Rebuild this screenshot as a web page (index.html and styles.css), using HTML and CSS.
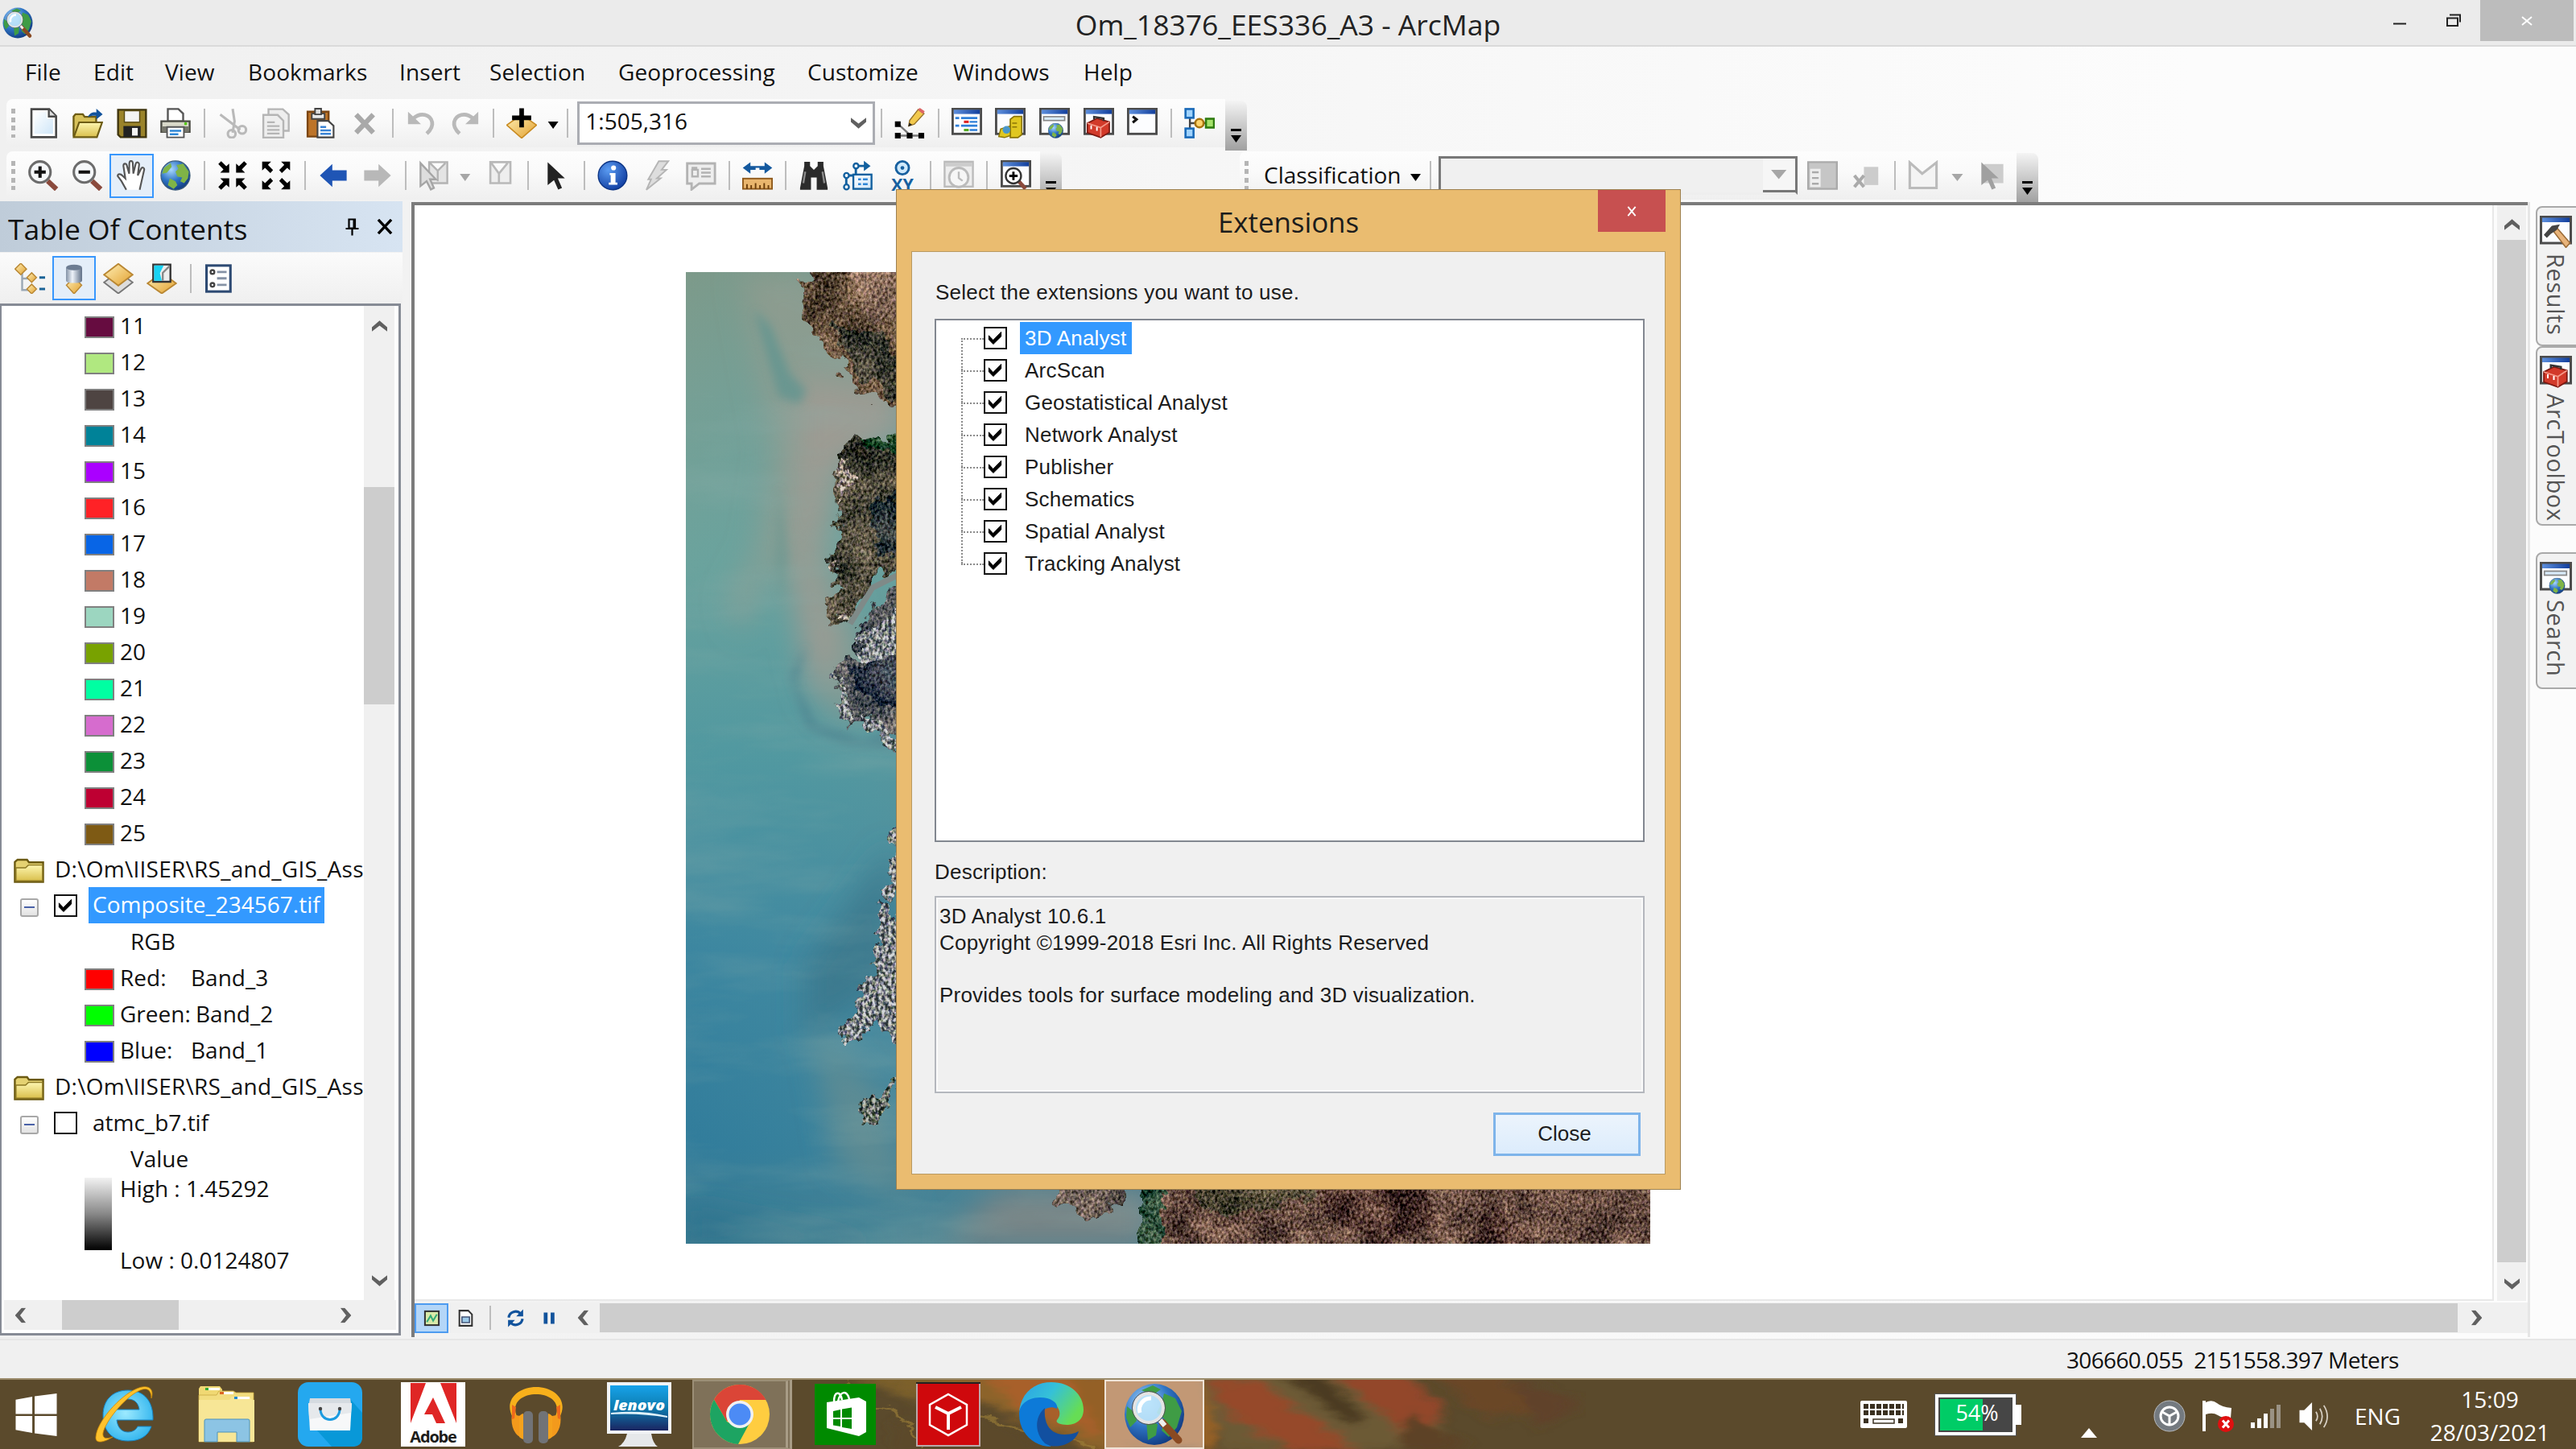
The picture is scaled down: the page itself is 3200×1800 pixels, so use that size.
FILE: index.html
```html
<!DOCTYPE html>
<html lang="en">
<head>
<meta charset="utf-8">
<title>Om_18376_EES336_A3 - ArcMap</title>
<link rel="stylesheet" href="styles.css">
</head>
<body>
<svg class="defs" width="0" height="0" aria-hidden="true">
  <defs>
    <linearGradient id="gold" x1="0" y1="0" x2="1" y2="1"><stop offset="0" stop-color="#fff0b8"/><stop offset="1" stop-color="#e2a02e"/></linearGradient>
    <linearGradient id="yellow" x1="0" y1="0" x2="0" y2="1"><stop offset="0" stop-color="#fdf6b0"/><stop offset="1" stop-color="#d9bf4c"/></linearGradient>
    <linearGradient id="ice" x1="0" y1="0" x2="1" y2="1"><stop offset="0" stop-color="#fff"/><stop offset="1" stop-color="#cfe6f8"/></linearGradient>
    <radialGradient id="ball" cx=".35" cy=".3" r=".8"><stop offset="0" stop-color="#a9d8ff"/><stop offset=".5" stop-color="#2f74c4"/><stop offset="1" stop-color="#0c3276"/></radialGradient>
    <radialGradient id="info" cx=".35" cy=".3" r=".8"><stop offset="0" stop-color="#5b9cf2"/><stop offset="1" stop-color="#0c389c"/></radialGradient>
    <linearGradient id="bar" x1="0" x2="1"><stop offset="0" stop-color="#5d8fdd"/><stop offset="1" stop-color="#123f9d"/></linearGradient>
    <linearGradient id="can" x1="0" x2="1"><stop offset="0" stop-color="#8291a5"/><stop offset=".4" stop-color="#eef3fa"/><stop offset="1" stop-color="#5f6f86"/></linearGradient>
  </defs>
  <symbol id="i-win" viewBox="0 0 16 16"><rect x=".6" y=".6" width="14.8" height="13" fill="#fcfdff" stroke="#4b4b4b" stroke-width="1.2"/><rect x="1.2" y="1" width="13.6" height="2.2" fill="url(#bar)"/></symbol>
  <symbol id="i-globe" viewBox="0 0 16 16"><circle cx="8" cy="8" r="7.6" fill="url(#ball)" stroke="#3b5c7c" stroke-width=".5"/><path d="M8.500 2.500L12 1.800 15 6l-.5 3.500-2 2.500-2-1 1-2-2.500-.5L8 6l1.500-1.500zM2 4l3.500-2.500L6 3.500 3.500 6.500 1 7zM5 9.500l3 1.500 1 2-2 2L4 13z" fill="#7fb447"/></symbol>
  <symbol id="i-new" viewBox="0 0 16 16"><path d="M1.700.7h9.300l3.600 3.600v11H1.700z" fill="#fff" stroke="#4a4a4a" stroke-width="1.100"/><path d="M3.200 2.200h6.500v3.400h3.300v8H3.200z" fill="url(#ice)"/><path d="M10.800.8v3.700h3.700" fill="#ddd" stroke="#4a4a4a"/></symbol>
  <symbol id="i-open" viewBox="0 0 16 16"><path d="M.6 15V4.500l1-1.200h3.800l1 1.400h6v3" fill="#d7c15a" stroke="#6d5c14"/><path d="M.7 15.300L3.500 7.600h12l-2.700 7.700z" fill="url(#yellow)" stroke="#6d5c14" stroke-width=".9"/><path d="M8 4.800C9 2.500 11 2 12.500 2.400V.4L15.800 3.400 12.500 6V4.200C11 3.900 9.500 4.200 8 4.800z" fill="#12539c"/></symbol>
  <symbol id="i-save" viewBox="0 0 16 16"><path d="M.7 1h14.600v14.300H2L.7 14z" fill="#9a832a" stroke="#3f350e"/><rect x="4" y="1.500" width="8" height="6" fill="#f4f4f4" stroke="#584a16" stroke-width=".6"/><path d="M3.500 9.500h9v5.800h-9z" fill="#222"/><path d="M8 10.500h3v4H8z" fill="#f4f4f4"/></symbol>
  <symbol id="i-print" viewBox="0 0 16 16"><path d="M4 7V.6h5.500L12 3v4z" fill="#fff" stroke="#555"/><path d="M.6 7h14.800v5.500H.6z" fill="#d9d9c9" stroke="#4a4a42"/><path d="M1 9.700h14v3H1z" fill="#77776c"/><path d="M3.600 10h8.800v5.400H3.600z" fill="#fff" stroke="#555" stroke-width=".8"/><path d="M5 12h6M5 13.800h4.500" stroke="#2e86d6"/><circle cx="13.300" cy="8.300" r=".8" fill="#57c718"/></symbol>
  <symbol id="i-cut" viewBox="0 0 16 16"><g fill="none" stroke="#b9b9b9" stroke-width="1.300"><path d="M1.500 3.500L12 11.500M8 .5L9 7l-1 6"/><circle cx="13" cy="11.500" r="2"/><circle cx="7.500" cy="13.600" r="2"/></g></symbol>
  <symbol id="i-copy" viewBox="0 0 16 16"><g fill="#eee" stroke="#b5b5b5"><path d="M4 .7h7.500L14.600 3.500V12H4z"/><path d="M1.300 3.700h7.500l3 3v8.800H1.300z"/><path d="M3.300 7.500h4M3.300 9.500h6.500M3.300 11.500h6.500M3.300 13.400h6.500"/></g></symbol>
  <symbol id="i-paste" viewBox="0 0 16 16"><path d="M1.300 2h11v13h-11z" fill="#bd7429" stroke="#7c4612"/><path d="M3.500 3h6.700v2.800H3.500z" fill="#e9e9e9" stroke="#444" stroke-width=".8"/><path d="M5.200.4h3.200v3H5.200z" fill="#ddd" stroke="#444" stroke-width=".8"/><path d="M6.500 6.800h5.600l2.800 2.600v6H6.500z" fill="#fff" stroke="#444" stroke-width=".9"/><path d="M8 10h3M8 11.800h5.500M8 13.600h5.500" stroke="#3a83d4"/></symbol>
  <symbol id="i-del" viewBox="0 0 16 16"><path d="M3.500 3.500l9 9.500M12.500 3.500l-9 9.500" stroke="#a9a9a9" stroke-width="2.600"/></symbol>
  <symbol id="i-undo" viewBox="0 0 16 16"><path d="M4 5.500C8 2 13 3.500 13.800 7.500c.4 2-.6 4-2.800 6" fill="none" stroke="#b9b9b9" stroke-width="2"/><path d="M1.200 2v6.500H8z" fill="#b9b9b9"/></symbol>
  <symbol id="i-add" viewBox="0 0 16 16"><path d="M8 3.500L15.800 9 8 15.800.2 9z" fill="url(#gold)" stroke="#c98b22" stroke-width=".7"/><path d="M8 .2v10M3 5.200h10" stroke="#000" stroke-width="2.400"/></symbol>
  <symbol id="i-pencil" viewBox="0 0 16 16"><path d="M2 8.500l6.500 6M2 14.500h12" stroke="#777" fill="none"/><path d="M.3 7h3v3h-3zM.3 13h3v3h-3zM6.500 13h3v3h-3zM12.600 13h3v3h-3z" fill="#000"/><path d="M7.500 9.500L8 6.500 12.500.8l3 2.200L10.500 8.500z" fill="#f2c94d" stroke="#95712a" stroke-width=".6"/><path d="M12.300 1l1-1 2.600 1.800-1 1.400z" fill="#d66"/><path d="M7.300 9.800l.5-2 1.500 1z" fill="#222"/></symbol>
  <symbol id="i-toc" viewBox="0 0 16 16"><use href="#i-win"/><path d="M2 5.300h2M5 5.300h8.500M2 9.300h2M5 9.300h8.500" stroke="#2e7fd8" stroke-width="1.100"/><path d="M6.500 7.300H9" stroke="#d22" stroke-width="1.300"/><path d="M9.500 7.300h4M9.500 11.600h4" stroke="#2e7fd8"/><path d="M6.500 11.600H9" stroke="#5a2" stroke-width="1.300"/></symbol>
  <symbol id="i-cat" viewBox="0 0 16 16"><use href="#i-win"/><path d="M8 6l2-1.500h4V14l-2 1.500H8z" fill="#e0c720" stroke="#8a7506" stroke-width=".7"/><path d="M9 8h2.500M9 10h2.500" stroke="#8a7506" stroke-width=".7"/><path d="M3 11l5-1.500v5L5 15.500 2 15z" fill="#e0c720" stroke="#8a7506" stroke-width=".6"/><circle cx="6" cy="11.500" r="2" fill="#4a97c9"/></symbol>
  <symbol id="i-srch" viewBox="0 0 16 16"><use href="#i-win"/><rect x="2.300" y="4.600" width="11" height="2" fill="#d8ebfa" stroke="#888" stroke-width=".7"/><svg x="4.500" y="7.800" width="8.200" height="8.200"><use href="#i-globe"/></svg></symbol>
  <symbol id="i-tbx" viewBox="0 0 16 16"><use href="#i-win"/><path d="M2 8l5-2.500 6.500 1.800v5.500L9 15.500 2 13z" fill="#d23a2a" stroke="#7c1710" stroke-width=".7"/><path d="M2 8l7 2.300 4.500-3M9 10.300v5" fill="none" stroke="#f59a8a" stroke-width=".7"/><path d="M5.500 6V4.700l5 .8v1.300" fill="none" stroke="#333"/><path d="M4 9.200v2M7 10v2" stroke="#fff" stroke-width=".8"/></symbol>
  <symbol id="i-py" viewBox="0 0 16 16"><use href="#i-win"/><path d="M3 4.500l2 1.500-2 1.700" fill="none" stroke="#111" stroke-width="1.300"/></symbol>
  <symbol id="i-ham" viewBox="0 0 16 16"><use href="#i-win"/><path d="M7 8l1.500-2L15 13.500 13 15.800z" fill="#e8b37a" stroke="#9a6a35" stroke-width=".6"/><path d="M2 9.500L6 5l4-.7L8.500 7 5.500 9 3.500 11z" fill="#444"/></symbol>
  <symbol id="i-model" viewBox="0 0 16 16"><path d="M3 3v10M3 8h8" stroke="#444" fill="none"/><g stroke-width="1.100"><rect x=".7" y=".6" width="4.200" height="4.600" fill="#9fd3ff" stroke="#1a6ab8"/><rect x=".7" y="10.800" width="4.200" height="4.600" fill="#9fd3ff" stroke="#1a6ab8"/><circle cx="8" cy="8" r="2.200" fill="#ffd36b" stroke="#a8720d"/><rect x="11.400" y="5.700" width="4.200" height="4.600" fill="#a6e26b" stroke="#2f7c10"/></g></symbol>
  <symbol id="i-lens" viewBox="0 0 16 16"><path d="M10.200 10.800l4.600 4.400" stroke="#8b4a3c" stroke-width="2.600"/><circle cx="6.200" cy="6.200" r="5.500" fill="#f5f7f9" stroke="#6c6c6c" stroke-width="1.300"/><path d="M3.200 6.200h6" stroke="#111" stroke-width="1.700"/></symbol>
  <symbol id="i-hand" viewBox="0 0 16 16"><path d="M5 15.500L2.500 11 .5 8.300c0-1.300 1.600-1.300 2.500-.2L4.500 9.500 3.500 3c0-1.500 1.500-1.500 1.800-.2L6.500 7 6.600 1.500C6.700 0 8.300 0 8.400 1.500L8.700 7l1.200-5c.4-1.400 2-1 1.800.5L11 8l1.700-3.500c.7-1.200 2-.5 1.600.8L13 11l-1 4.500" fill="#fff" stroke="#555" stroke-width=".9"/></symbol>
  <symbol id="i-in4" viewBox="0 0 16 16"><path d="M6.200 6.500H1.500L3.200 4.800.5 2 2 .5l2.700 2.700L6.200 1.800zM9.800 6.500h4.700l-1.700-1.700L15.500 2 14 .5l-2.700 2.700-1.500-1.400zM6.200 9.500H1.500l1.700 1.700L.5 14 2 15.500l2.700-2.700 1.500 1.400zM9.800 9.500h4.700l-1.700 1.700 2.700 2.800-1.500 1.500-2.700-2.700-1.500 1.400z"/></symbol>
  <symbol id="i-out4" viewBox="0 0 16 16"><path d="M.7.700h4.700L3.700 2.400l2.700 2.800L5 6.700 2.200 4 .7 5.400zM15.300.700h-4.700l1.700 1.700-2.700 2.800L11 6.700 13.800 4l1.500 1.400zM.7 15.300h4.700l-1.700-1.700 2.700-2.800L5 9.300 2.200 12 .7 10.600zM15.300 15.300h-4.700l1.700-1.700-2.700-2.800L11 9.300l2.800 2.700 1.500-1.400z"/></symbol>
  <symbol id="i-back" viewBox="0 0 16 16"><path d="M1 8l6.500-6v3.300H15v5.400H7.500V14z"/></symbol>
  <symbol id="i-selft" viewBox="0 0 16 16"><path d="M5.500 1H15v11H5.500zM6 1.500l4 4 4-4M10 5.500V11" fill="#e4e4e4" stroke="#b3b3b3"/><path d="M1 1.500l8 8.500H6l2 4.500-1.600.8L4.200 11 1 13.500z" fill="#ddd" stroke="#a5a5a5"/></symbol>
  <symbol id="i-clr" viewBox="0 0 16 16"><path d="M3 1h10.500v11H3zM3.500 1.500L7.500 7l4.500-5.500M7.500 7v4.500" fill="#eee" stroke="#b9b9b9" stroke-width="1.100"/></symbol>
  <symbol id="i-arrow" viewBox="0 0 16 16"><path d="M3.500 1l9 8.500H8.800l2.200 5-2 .9-2.200-5L3.500 13z" fill="#222"/></symbol>
  <symbol id="i-info" viewBox="0 0 16 16"><circle cx="8" cy="8" r="7.500" fill="url(#info)" stroke="#0d3585" stroke-width=".6"/><circle cx="8.500" cy="4" r="1.300" fill="#fff"/><path d="M6.500 6.700h3v5h1v1.100H6v-1.100h1V7.800h-.5z" fill="#fff"/></symbol>
  <symbol id="i-bolt" viewBox="0 0 16 16"><path d="M9 .5h5L10.500 5H13L8 9.500h2L2.500 15.500 5 10H3.500z" fill="#ddd" stroke="#b5b5b5" stroke-width=".8"/></symbol>
  <symbol id="i-html" viewBox="0 0 16 16"><path d="M.7 1.700h14.500v10.500H7L3 15.300v-3.100H.7z" fill="#eee" stroke="#b3b3b3" stroke-width="1.200"/><path d="M3.300 5h3v3.500h-3zM8 4.500h5M8 6.500h5M8 8.500h5M3 4h3" stroke="#b3b3b3" fill="none"/></symbol>
  <symbol id="i-meas" viewBox="0 0 16 16"><path d="M.3 4l4-3v2h7.400V1l4 3-4 3V5H9V4H7v1H4.300v2z" fill="#14599f"/><rect x=".4" y="9.600" width="15.200" height="5.400" fill="#e9b66e" stroke="#8f5a1c" stroke-width=".8"/><path d="M2.500 15v-2.500M4.700 15v-2M7 15v-3M9.300 15v-2M11.500 15v-3M13.700 15v-2" stroke="#6b3d0b" stroke-width=".8"/></symbol>
  <symbol id="i-find" viewBox="0 0 16 16"><path d="M.8 14.500L3 3V.8h3V3l2 2 2-2V.8h3V3l2.200 11.500V15.500H9.500V9h-3v6.500H.8z" fill="#2b2b2b"/><path d="M3.500 6L2.500 12M12.500 6l1 6" stroke="#8a8a8a"/></symbol>
  <symbol id="i-route" viewBox="0 0 16 16"><path d="M1.800 14V8h5V3h5" fill="none" stroke="#12609f" stroke-width="1.200"/><path d="M11 .3L14.500 3 11 5.700z" fill="#12609f"/><g fill="#fff" stroke="#12609f"><circle cx="1.900" cy="14" r="1.300"/><circle cx="1.900" cy="8" r="1.300"/><circle cx="6.900" cy="3" r="1.300"/><rect x="5.500" y="7.500" width="9.500" height="7.500" fill="url(#ice)"/></g><path d="M8 10h1.500M10.500 10H13M8 12.500h1.500M10.500 12.500H13" stroke="#2e86d6"/></symbol>
  <symbol id="i-time" viewBox="0 0 16 16"><rect x=".6" y=".8" width="14.800" height="13" fill="#eee" stroke="#bbb"/><path d="M1 2.300h14" stroke="#ccc" stroke-width="2"/><circle cx="8" cy="9" r="5" fill="#f6f6f6" stroke="#bbb" stroke-width="1.200"/><path d="M8 6v3.300l2 1.500" stroke="#bbb" fill="none"/></symbol>
  <symbol id="i-view" viewBox="0 0 16 16"><use href="#i-win"/><path d="M9.500 11l3.500 4" stroke="#8b4a3c" stroke-width="2"/><circle cx="6.700" cy="8.200" r="4" fill="#fff" stroke="#333"/><path d="M4.500 8.200h4.400M6.700 6v4.400" stroke="#000" stroke-width="1.200"/></symbol>
  <symbol id="i-tree" viewBox="0 0 16 16"><path d="M4 5v9h5M4 8h5" stroke="#9aa7b4" fill="none"/><g fill="url(#gold)" stroke="#b98733" stroke-width=".6"><path d="M3.300 0l3 3-3 3-3-3z"/><path d="M9 5l2.500 2.500L9 10 6.500 7.500z"/><path d="M9 11l2.500 2.500L9 16l-2.500-2.500z"/></g><path d="M13 7.500h3M13 13.500h3" stroke="#1a6397" stroke-width="1.300"/></symbol>
  <symbol id="i-src" viewBox="0 0 16 16"><path d="M8 7.500l4 4L8 16l-4-4.500z" fill="url(#gold)" stroke="#b98733" stroke-width=".6"/><path d="M3.800 2.500v6.500c0 1.800 8.400 1.800 8.400 0V2.500" fill="url(#can)"/><ellipse cx="8" cy="2.200" rx="4.200" ry="1.500" fill="#6c7c92"/></symbol>
  <symbol id="i-vis" viewBox="0 0 16 16"><path d="M8 4.500l7.500 5.500L8 15.800.5 10z" fill="#ddd" stroke="#777" stroke-width=".8"/><path d="M8 .3l7.500 5.700L8 11.700.5 6z" fill="url(#gold)" stroke="#b98733" stroke-width=".8"/></symbol>
  <symbol id="i-sel" viewBox="0 0 16 16"><path d="M8 5l7.500 5.500L8 15.800.5 10.500z" fill="url(#gold)" stroke="#b98733" stroke-width=".8"/><path d="M3.500.7h9v9h-9z" fill="#eee" stroke="#333"/><path d="M4 1.200h5l-2 4 1 4H4z" fill="#19d3f3"/><path d="M12 1.500L8.500 5v4" fill="none" stroke="#888"/></symbol>
  <symbol id="i-list" viewBox="0 0 16 16"><rect x="1.500" y="1.200" width="12.500" height="13.600" fill="#fff" stroke="#2d4a73" stroke-width="1.300"/><g fill="none" stroke="#444"><circle cx="4.600" cy="4.600" r="1"/><circle cx="4.600" cy="11.300" r="1"/></g><path d="M7 4.600h5M7 7.900h5M7 11.300h5" stroke="#8592a5" stroke-width="1.200"/></symbol>
  <symbol id="i-folder" viewBox="0 0 16 13"><path d="M.6 12.400V2L2 .8h5l1 1.400h7.400v10.200z" fill="#e5d272" stroke="#6b5a12"/><path d="M1.200 5h5l1.500-1.400h7.400v8.300H1.200z" fill="url(#yellow)" stroke="#8b7722" stroke-width=".6"/></symbol>
  <symbol id="i-chk" viewBox="0 0 12 12"><path d="M2 4.600l2.800 3L10 2.300v2.900L4.900 10.200 2 7.200z" fill="#000" stroke="#000" stroke-width=".5"/></symbol>
  <symbol id="i-up" viewBox="0 0 18 13"><path d="M0 13V8L9 0l9 8v5L9 6z" fill="#606060"/></symbol>
  <symbol id="i-arcmap" viewBox="0 0 80 80"><ellipse cx="40" cy="40" rx="37" ry="38" fill="url(#ball)"/><path d="M24 10l14-6 10 5-10 7zM52 14l14 6 8 16-6 20-10 12-9-8 4-14-10-8 6-12zM6 30l10 8 2 10-8 8-5-12zM30 48l14 4-2 14-10 6z" fill="#3f9c45"/><path d="M50 50l20 22" stroke="#8a4a22" stroke-width="9" stroke-linecap="round"/><path d="M47 47l6 7" stroke="#eee" stroke-width="6"/><circle cx="33" cy="32" r="18" fill="#bfe6fb" fill-opacity=".9" stroke="#e4e4e4" stroke-width="4"/><circle cx="33" cy="32" r="20.500" fill="none" stroke="#555" stroke-width="1"/><path d="M22 38a14 14 0 0 1 14-18" stroke="#fff" stroke-width="5" fill="none"/></symbol>
</svg>

<header class="titlebar">
  <svg class="app-icon"><use href="#i-arcmap"/></svg>
  <h1 class="window-title">Om_18376_EES336_A3 - ArcMap</h1>
  <div class="window-controls">
    <svg class="min" viewBox="0 0 16 2"><path d="M0 0h16v2H0z" fill="#222"/></svg>
    <svg class="max" viewBox="0 0 18 17"><path d="M1 5.500h13v9.500H1zM4 1.500h13v9" fill="none" stroke="#222" stroke-width="2"/></svg>
    <span class="win-close"><svg viewBox="0 0 14 12"><path d="M1 1l12 10M13 1L1 11" stroke="#fff" stroke-width="2"/></svg></span>
  </div>
</header>

<div class="chrome">
  <nav class="menu">
    <span class="m1">File</span><span class="m2">Edit</span><span class="m3">View</span><span class="m4">Bookmarks</span><span class="m5">Insert</span><span class="m6">Selection</span><span class="m7">Geoprocessing</span><span class="m8">Customize</span><span class="m9">Windows</span><span class="m10">Help</span>
  </nav>
  <div class="bar-row">
    <div class="toolbar">
      <i class="grip"></i>
      <span class="btn"><svg><use href="#i-new"/></svg></span><span class="btn"><svg><use href="#i-open"/></svg></span><span class="btn"><svg><use href="#i-save"/></svg></span><span class="btn"><svg><use href="#i-print"/></svg></span>
      <i class="sep"></i>
      <span class="btn"><svg><use href="#i-cut"/></svg></span><span class="btn"><svg><use href="#i-copy"/></svg></span><span class="btn"><svg><use href="#i-paste"/></svg></span><span class="btn"><svg><use href="#i-del"/></svg></span>
      <i class="sep"></i>
      <span class="btn"><svg><use href="#i-undo"/></svg></span><span class="btn flip"><svg><use href="#i-undo"/></svg></span>
      <i class="sep"></i>
      <span class="btn"><svg><use href="#i-add"/></svg></span><i class="drop"></i>
      <i class="sep"></i>
      <div class="scale-box"><span>1:505,316</span><svg class="down"><use href="#i-up"/></svg></div>
      <i class="sep"></i>
      <span class="btn"><svg><use href="#i-pencil"/></svg></span>
      <i class="sep"></i>
      <span class="btn"><svg><use href="#i-toc"/></svg></span><span class="btn"><svg><use href="#i-cat"/></svg></span><span class="btn"><svg><use href="#i-srch"/></svg></span><span class="btn"><svg><use href="#i-tbx"/></svg></span><span class="btn"><svg><use href="#i-py"/></svg></span>
      <i class="sep"></i>
      <span class="btn"><svg><use href="#i-model"/></svg></span>
    </div>
    <span class="overflow"><i></i><b></b></span>
  </div>
  <div class="bar-row second">
    <div class="toolbar tools">
      <i class="grip"></i>
      <span class="btn"><svg viewBox="0 0 16 16"><use href="#i-lens"/><path d="M6.200 3.200v6" stroke="#111" stroke-width="1.700"/></svg></span><span class="btn"><svg><use href="#i-lens"/></svg></span><span class="btn active"><svg><use href="#i-hand"/></svg></span><span class="btn"><svg><use href="#i-globe"/></svg></span>
      <i class="sep"></i>
      <span class="btn"><svg><use href="#i-in4"/></svg></span><span class="btn"><svg><use href="#i-out4"/></svg></span>
      <i class="sep"></i>
      <span class="btn blue"><svg><use href="#i-back"/></svg></span><span class="btn gray flip"><svg><use href="#i-back"/></svg></span>
      <i class="sep"></i>
      <span class="btn"><svg><use href="#i-selft"/></svg></span><i class="drop off"></i><span class="btn"><svg><use href="#i-clr"/></svg></span>
      <i class="sep"></i>
      <span class="btn"><svg><use href="#i-arrow"/></svg></span>
      <i class="sep"></i>
      <span class="btn"><svg><use href="#i-info"/></svg></span><span class="btn"><svg><use href="#i-bolt"/></svg></span><span class="btn"><svg><use href="#i-html"/></svg></span>
      <i class="sep"></i>
      <span class="btn"><svg><use href="#i-meas"/></svg></span>
      <i class="sep"></i>
      <span class="btn"><svg><use href="#i-find"/></svg></span><span class="btn"><svg><use href="#i-route"/></svg></span><span class="btn"><svg class="xy" viewBox="0 0 16 16"><circle cx="8" cy="4" r="3.400" fill="#cfe9fb" stroke="#17609f" stroke-width="1.200"/><circle cx="8" cy="4" r="1" fill="#17609f"/><text x="8" y="15.900" text-anchor="middle" font-weight="700" font-size="9" fill="#17609f">XY</text></svg></span>
      <i class="sep"></i>
      <span class="btn"><svg><use href="#i-time"/></svg></span>
      <i class="sep"></i>
      <span class="btn"><svg><use href="#i-view"/></svg></span>
    </div>
    <span class="overflow"><i></i><b></b></span>
    <div class="toolbar classify">
      <i class="grip"></i>
      <span class="label">Classification</span><i class="drop"></i>
      <i class="sep"></i>
      <div class="layer-box"><span><i class="drop off"></i></span></div>
      <span class="btn"><svg viewBox="0 0 16 16"><path d="M.5 1h15v14H.5z" fill="#c6c6c6" stroke="#aaa"/><path d="M1.500 4.500h5.500v9.500H1.500z" fill="#eee"/><path d="M2.500 6.300H6M2.500 9.300H6M2.500 12.300H6" stroke="#aaa"/></svg></span><span class="btn"><svg viewBox="0 0 16 16"><path d="M6.500 3.500h7.500V13H6.500z" fill="#ccc"/><path d="M1.500 8l5 6M6.500 8l-5 6" stroke="#aaa" stroke-width="1.700"/></svg></span>
      <i class="sep"></i>
      <span class="btn"><svg viewBox="0 0 16 16"><path d="M1 1.200L7.500 7 15 1.200V14.500H1z" fill="#f4f4f4" stroke="#bbb" stroke-width="1.300"/></svg></span><i class="drop off"></i><span class="btn"><svg viewBox="0 0 16 16"><path d="M5 2h10v10H5z" fill="#ccc"/><path d="M3.500 1l9 8.500H8.800l2.200 5-2 .9-2.200-5L3.500 13z" fill="#a0a0a0"/></svg></span>
    </div>
    <span class="overflow last"><i></i><b></b></span>
  </div>
</div>

<main class="workspace">
  <aside class="toc">
    <div class="toc-head"><h2>Table Of Contents</h2>
      <svg class="pin" viewBox="0 0 16 22"><path d="M4 1.500h7.500v11H4zM0 13h16M8 13v8.500" fill="none" stroke="#000" stroke-width="2.200"/><path d="M9 1h3v12H9z"/></svg>
      <svg class="x" viewBox="0 0 20 20"><path d="M1.500 1l17 18M18.500 1l-17 18" stroke="#000" stroke-width="3.600"/></svg>
    </div>
    <div class="toc-tools">
      <span class="btn"><svg><use href="#i-tree"/></svg></span><span class="btn active"><svg><use href="#i-src"/></svg></span><span class="btn"><svg><use href="#i-vis"/></svg></span><span class="btn"><svg><use href="#i-sel"/></svg></span><i class="sep"></i><span class="btn"><svg><use href="#i-list"/></svg></span>
    </div>
    <div class="tree">
      <div class="tree-main">
        <div class="rows">
          <div class="row cls"><i class="sw c11"></i>11</div>
          <div class="row cls"><i class="sw c12"></i>12</div>
          <div class="row cls"><i class="sw c13"></i>13</div>
          <div class="row cls"><i class="sw c14"></i>14</div>
          <div class="row cls"><i class="sw c15"></i>15</div>
          <div class="row cls"><i class="sw c16"></i>16</div>
          <div class="row cls"><i class="sw c17"></i>17</div>
          <div class="row cls"><i class="sw c18"></i>18</div>
          <div class="row cls"><i class="sw c19"></i>19</div>
          <div class="row cls"><i class="sw c20"></i>20</div>
          <div class="row cls"><i class="sw c21"></i>21</div>
          <div class="row cls"><i class="sw c22"></i>22</div>
          <div class="row cls"><i class="sw c23"></i>23</div>
          <div class="row cls"><i class="sw c24"></i>24</div>
          <div class="row cls"><i class="sw c25"></i>25</div>
          <div class="row dir"><svg><use href="#i-folder"/></svg><span>D:\Om\IISER\RS_and_GIS_Ass</span></div>
          <div class="row layer"><i class="minus"></i><span class="check"><svg><use href="#i-chk"/></svg></span><span class="picked">Composite_234567.tif</span></div>
          <div class="row head">RGB</div>
          <div class="row cls band"><i class="sw red"></i><span class="chan">Red:</span>Band_3</div>
          <div class="row cls band"><i class="sw green"></i><span class="chan wide">Green:</span>Band_2</div>
          <div class="row cls band"><i class="sw blue-sw"></i><span class="chan">Blue:</span>Band_1</div>
          <div class="row dir"><svg><use href="#i-folder"/></svg><span>D:\Om\IISER\RS_and_GIS_Ass</span></div>
          <div class="row layer"><i class="minus"></i><span class="check"></span><span class="plain">atmc_b7.tif</span></div>
          <div class="row head">Value</div>
          <div class="stretch"><i class="ramp"></i><div class="range"><span>High : 1.45292</span><span>Low : 0.0124807</span></div></div>
        </div>
        <div class="vscroll"><svg><use href="#i-up"/></svg><i class="thumb"></i><svg class="down"><use href="#i-up"/></svg></div>
      </div>
      <div class="hscroll"><svg class="left"><use href="#i-up"/></svg><i class="thumb"></i><svg class="right"><use href="#i-up"/></svg></div>
    </div>
  </aside>

  <section class="map-pane">
    <div class="map-main">
      <div class="viewport">
        <svg class="raster" viewBox="852 338 1198 1207" preserveAspectRatio="none">
          <defs>
            <linearGradient id="sea" x1="0" y1="0" x2="0" y2="1"><stop offset="0" stop-color="#7d9a8a"/><stop offset=".12" stop-color="#779f94"/><stop offset=".3" stop-color="#6ba39d"/><stop offset=".5" stop-color="#5098a0"/><stop offset=".7" stop-color="#3c86a0"/><stop offset=".9" stop-color="#317c9b"/><stop offset="1" stop-color="#3b7a90"/></linearGradient>
            <linearGradient id="seaR" x1="0" x2="1"><stop offset="0" stop-color="#55a0a8" stop-opacity="0"/><stop offset=".35" stop-color="#6d8f92" stop-opacity=".45"/></linearGradient>
            <filter id="soft" x="-40%" y="-40%" width="180%" height="180%"><feGaussianBlur stdDeviation="18"/></filter>
            <filter id="soft2" x="-40%" y="-40%" width="180%" height="180%"><feGaussianBlur stdDeviation="6"/></filter>
            <filter id="swirl" x="0" y="0" width="100%" height="100%" color-interpolation-filters="sRGB"><feTurbulence type="fractalNoise" baseFrequency=".004 .018" numOctaves="5" seed="4"/><feColorMatrix values="0 0 0 0 .55  0 0 0 0 .68  0 0 0 0 .66  2.400 0 0 0 -1.050"/></filter>
            <filter id="land" x="-5%" y="-5%" width="110%" height="110%" color-interpolation-filters="sRGB">
              <feTurbulence type="fractalNoise" baseFrequency=".05" numOctaves="3" seed="2" result="w"/>
              <feDisplacementMap in="SourceGraphic" in2="w" scale="34" xChannelSelector="R" yChannelSelector="G" result="s"/>
              <feTurbulence type="fractalNoise" baseFrequency=".3 .24" numOctaves="3" seed="9"/>
              <feColorMatrix values="1.700 0 0 0 -.35  1.500 .2 0 0 -.35  1.400 0 .3 0 -.35  0 0 0 0 1" result="n"/>
              <feTurbulence type="fractalNoise" baseFrequency=".022" numOctaves="3" seed="21"/>
              <feColorMatrix values="2 0 0 0 -.47  1.600 0 0 0 -.3  1.300 0 0 0 -.16  0 0 0 0 1" result="b"/>
              <feComposite in="s" in2="n" operator="arithmetic" k2="1" k3=".55" k4="-.275" result="m"/>
              <feComposite in="m" in2="b" operator="arithmetic" k2="1" k3=".3" k4="-.15" result="mb"/>
              <feComposite in="mb" in2="s" operator="in"/>
            </filter>
            <filter id="town" x="-10%" y="-10%" width="120%" height="120%" color-interpolation-filters="sRGB">
              <feTurbulence type="fractalNoise" baseFrequency=".06" numOctaves="3" seed="5" result="w"/>
              <feDisplacementMap in="SourceGraphic" in2="w" scale="24" xChannelSelector="R" yChannelSelector="G" result="s"/>
              <feTurbulence type="fractalNoise" baseFrequency=".25 .2" numOctaves="3" seed="3"/>
              <feColorMatrix values="3 0 0 0 -1  2.700 .3 0 0 -1  2.500 0 .5 0 -1  0 0 0 0 1" result="n"/>
              <feComposite in="s" in2="n" operator="arithmetic" k2="1" k3=".65" k4="-.32" result="m"/>
              <feComposite in="m" in2="s" operator="in"/>
            </filter>
          </defs>
          <rect x="852" y="338" width="1198" height="1207" fill="url(#sea)"/>
          <rect x="852" y="338" width="1198" height="1207" fill="url(#seaR)"/>
          <g filter="url(#soft)">
            <path d="M920 340L1000 338 1120 450 1120 520 1050 580 1030 680 1060 770 1110 880 1040 900 1000 840 980 730 960 690 920 790 905 745 940 680 960 560z" fill="#9a9c90" fill-opacity=".6"/>
            <path d="M990 470L1120 490V540L1035 580 1010 700 1045 800 1010 880 985 700z" fill="#a39b94" fill-opacity=".8"/>
            <path d="M1000 1200L1110 1050V1220L1000 1290z" fill="#39758a" fill-opacity=".75"/>
            <path d="M1010 1280L1100 1360 1130 1490 1040 1450z" fill="#6b8f90" fill-opacity=".7"/>
            <path d="M1240 1480h190v65h-260z" fill="#7d8484" fill-opacity=".9"/>
            <path d="M852 1500l100 20 160 25H852z" fill="#2b6f8c" fill-opacity=".7"/>
          </g>
          <g filter="url(#soft2)" fill="#5f9490" opacity=".75">
            <path d="M937 385l20 20 25 60 20 20-10 18-25-10z"/><path d="M982 840l20-40-14 50 25 50 60 20 60-20-20 30-60-5-50-20z" fill="#487f8d"/><path d="M968 600l12 90-10 60-8-60z" opacity=".6"/>
          </g>
          <rect x="852" y="338" width="1198" height="1207" filter="url(#swirl)" opacity=".28"/>
          <g filter="url(#land)">
            <path d="M1004 325L995 393 1014 415 1032 440 1052 464 1078 495 1130 502V325z" fill="#65523f"/>
            <path d="M1050 325h80v60l-50 15z" fill="#7d6556"/>
            <path d="M1035 400l60 10 40 80-30 5-50-40z" fill="#35382f"/>
            <path d="M1050 556L1062 540 1130 556V690L1088 722 1060 768 1038 772 1030 745 1042 725 1030 705 1042 665 1036 598z" fill="#48473a"/>
            <path d="M1085 630l45-25v60l-40 35z" fill="#1b2c31"/>
            <path d="M1064 542l70 8v10l-60-4z" fill="#1c4a2c"/>
            <path d="M1060 785L1130 712V930L1082 888 1050 900 1048 870 1035 835 1062 815z" fill="#565a5e"/>
            <path d="M1058 830l74-30v80l-60-10z" fill="#1d2c3e"/>
          </g>
          <path d="M1056 775l28-45 30-15" stroke="#7f8a88" stroke-width="7" fill="none"/>
          <g filter="url(#town)" fill="#7d8285">
            <path d="M1066 790l50-30v50l-50 20zM1036 832l16 24 8 40-16-6zM1070 880l46 40-4 16-40-40z"/>
            <path d="M1036 590l14-20 10 30-20 20zM1040 765l20-10-10 20zM1028 700l16-8-6 20z" fill="#8c8175"/>
            <path d="M1110 1020h12v60l-18 40-8-5 12-40z"/>
            <path d="M1092 1118L1120 1140V1300L1088 1270 1050 1302 1045 1282 1068 1235 1085 1205 1090 1165z"/>
            <path d="M1120 1338L1092 1395 1072 1395 1066 1372 1094 1356z" fill="#666d66"/>
          </g>
          <g filter="url(#land)">
            <path d="M1310 1465h90l-6 32-42 12-34-15z" fill="#6f625a"/>
            <path d="M1425 1465H2075V1570H1420z" fill="#624a40"/>
            <path d="M1640 1465l120 0 30 60-80 20-60-30zM1850 1490l60 60h-80z" fill="#4c342e"/>
            <path d="M1480 1465l160 0-20 30-120 20z" fill="#474332"/>
            <path d="M1416 1478l28-2 4 80h-32z" fill="#1c4433"/>
          </g>
        </svg>
      </div>
      <div class="vscroll"><svg><use href="#i-up"/></svg><i class="thumb"></i><svg class="down"><use href="#i-up"/></svg></div>
    </div>
    <div class="map-foot">
      <span class="view-btn on"><svg viewBox="0 0 16 16"><rect x="2.500" y="2.500" width="11" height="11" fill="#d9e9a8" stroke="#333" stroke-width="1.300"/><path d="M4 11l3-5 2 4 3-5" stroke="#3a7" fill="none" stroke-width="1.300"/></svg></span>
      <span class="view-btn"><svg viewBox="0 0 16 16"><path d="M3 2h7l3 3v9H3z" fill="#fff" stroke="#333" stroke-width="1.300"/><path d="M5 7h6v4.500H5z" fill="#9ecbe9" stroke="#457"/></svg></span>
      <i class="sep"></i>
      <span class="view-btn"><svg viewBox="0 0 16 16"><path d="M2.500 7.500a5.500 5.500 0 0 1 9.500-3M13.500 8.500a5.500 5.500 0 0 1-9.500 3" fill="none" stroke="#12539c" stroke-width="2"/><path d="M14 1v5.500H8.500zM2 15V9.500h5.500z" fill="#12539c"/></svg></span>
      <span class="view-btn"><svg viewBox="0 0 16 16"><path d="M3.500 3.500h3v9h-3zM9 3.500h3v9H9z" fill="#12539c"/></svg></span>
      <div class="hscroll"><svg class="left"><use href="#i-up"/></svg><i class="thumb"></i><svg class="right"><use href="#i-up"/></svg></div>
    </div>
  </section>

  <aside class="tabs">
    <div class="tab t-results"><svg><use href="#i-ham"/></svg><span>Results</span></div>
    <div class="tab t-toolbox"><svg><use href="#i-tbx"/></svg><span>ArcToolbox</span></div>
    <div class="tab t-search"><svg><use href="#i-srch"/></svg><span>Search</span></div>
  </aside>
</main>

<footer class="status"><span>306660.055&nbsp; 2151558.397 Meters</span></footer>

<footer class="taskbar">
  <svg class="wallpaper" viewBox="0 0 1140 88" preserveAspectRatio="none">
    <defs><filter id="fade" x="-10%" y="-30%" width="120%" height="160%"><feGaussianBlur stdDeviation="6"/></filter>
    <filter id="grain" x="0" y="0" width="100%" height="100%" color-interpolation-filters="sRGB"><feTurbulence type="fractalNoise" baseFrequency=".02 .06" numOctaves="4" seed="7" result="w"/><feDisplacementMap in="SourceGraphic" in2="w" scale="22" xChannelSelector="R" yChannelSelector="G"/></filter></defs>
    <g filter="url(#grain)"><g filter="url(#fade)">
      <path d="M0 -10h200l-30 40-60 5z" fill="#7d602a"/>
      <path d="M100 -10h300v100H300L220 50l-60-20z" fill="#8c642a"/>
      <path d="M170 -10h100l70 60-30 20-90-30z" fill="#a8602c"/>
      <path d="M270 -10h190v100H330z" fill="#946128"/>
      <path d="M60 50l100-10 140 60H60z" fill="#5b4a2c"/>
      <path d="M440 -10h260l60 100H470z" fill="#6c5a36"/>
      <path d="M450 0l60 0 130 92h-80l-90-50z" fill="#96482a"/>
      <path d="M540 -10h50l60 60-20 10z" fill="#4c3a22"/>
      <path d="M600 -10h90l60 50-50 30z" fill="#934729"/>
      <path d="M700 40l80 50h-90z" fill="#5d4327"/>
      <path d="M720 -10h90l60 50-70 10z" fill="#6a4628"/>
      <path d="M830 0l90 30-60 30z" fill="#604229"/>
    </g><path d="M4 0q10 28 40 34t54 54M110 44q80 0 200 44" stroke="#a08238" stroke-width="3" fill="none" opacity=".6"/></g>
  </svg>
  <span class="start"><svg viewBox="0 0 52 54"><path d="M0 8l21-4v22H0zM24 3.500L52 0v26H24zM0 28.500h21V50L0 46zM24 28.500h28V54l-28-3.500z" fill="#fff"/></svg></span>
  <span class="task"><svg viewBox="0 0 80 80"><defs><radialGradient id="ie" cx=".45" cy=".45" r=".6"><stop offset="0" stop-color="#9ceaff"/><stop offset="1" stop-color="#32b5ee"/></radialGradient></defs><path d="M76 47H31c1 9 6 15 14 15 6 0 10-3 12-7h17c-4 12-14 18-29 18C26 73 14 61 14 41 14 22 26 10 45 10c20 0 32 14 31 37zM59 34c-1-8-6-13-14-13-7 0-13 5-14 13z" fill="url(#ie)" stroke="#1784c4"/><path d="M74 20C78 8 70 2 56 8 34 17 6 50 5 68c-1 10 12 6 21 0-8 3-13 2-12-5C17 49 40 20 58 11c9-5 16-3 16 9z" fill="#fdc22c" stroke="#c98706" stroke-width=".8"/></svg></span>
  <span class="task"><svg viewBox="0 0 80 80"><path d="M5 8l2-3h24l3 4v65H5z" fill="#f0d873"/><path d="M5 16h22l3-5h18l3 2h22v61H5z" fill="#f2dd80" stroke="#c9a941" stroke-width=".8"/><path d="M5 22h38l3-4h22l3 4h3v52H5z" fill="#f7e696"/><path d="M14 7h17v3H14zM31 12h17v3H31zM50 18h18v3H50z" fill="#fff"/><path d="M13 7h4v3h-4z" fill="#3a3"/><path d="M31 12h5v3h-5z" fill="#d62"/><path d="M49 18h4v3h-4z" fill="#28c"/><path d="M12 48q0-2 2-2h52q2 0 2 2v26H52V62H28v12H12z" fill="#8cc4e4" stroke="#4d92bb"/></svg></span>
  <span class="task"><svg viewBox="0 0 80 80"><rect width="80" height="80" rx="13" fill="#24a8ef"/><path d="M66 22l14 16v30q0 12-12 12H42L24 60z" fill="#0898d8"/><path d="M15 20h50l1 6H14z" fill="#d5dbe0"/><path d="M13 26h54l-2 34H15z" fill="#f7f8f9"/><path d="M13 26h54l-1 12-52 8z" fill="#e6e9ec"/><path d="M28 33c0 18 24 18 24 0" fill="none" stroke="#1b9be0" stroke-width="3"/><circle cx="28" cy="33" r="2.200" fill="#444"/><circle cx="52" cy="33" r="2.200" fill="#444"/></svg></span>
  <span class="task"><span class="adobe"><svg viewBox="0 0 80 56"><path d="M12 1h19L12 51zM49 1h20v50zM40 19l15 32H44l-5-11H29z" fill="#df2625"/></svg><b>Adobe</b></span></span>
  <span class="task"><svg viewBox="0 0 80 80"><path d="M11 44C-1 22 18 6 40 6s41 16 29 38l-5-2C71 26 58 15 40 15S9 26 16 42z" fill="#f7b01b"/><path d="M10 40l10 2v26c-8-4-12-16-10-28zM70 40l-10 2v26c8-4 12-16 10-28z" fill="#f39a1c"/><path d="M10 28l5 3-2 14-3 1zM70 28l-5 3 2 14 3 1z" fill="#ee6a1c"/><rect x="24" y="36" width="12" height="40" rx="5" fill="#717377"/><rect x="43" y="36" width="12" height="40" rx="5" fill="#717377"/><path d="M19 42q3-3 5-3v32q-3-1-5-3zM60 42q-3-3-5-3v32q3-1 5-3z" fill="#f5a21c"/></svg></span>
  <span class="task"><svg viewBox="0 0 80 80"><defs><linearGradient id="lv" x1="0" y1="0" x2="0" y2="1"><stop offset="0" stop-color="#17a3ea"/><stop offset=".5" stop-color="#0d7cb0"/><stop offset="1" stop-color="#1a2460"/></linearGradient></defs><path d="M0 0h80v64H0z" fill="#f2f4f6"/><path d="M4 4h72v56H4z" fill="url(#lv)"/><path d="M5 40q36-2 70 4v-2q-34-8-70-4z" fill="#dff2fb"/><path d="M25 64h30q2 12 8 16H14q8-4 11-16z" fill="#e6e8ea"/><text x="40" y="35" text-anchor="middle" textLength="64" lengthAdjust="spacingAndGlyphs" font-weight="800" font-style="italic" font-size="17" fill="#fff">lenovo</text></svg></span>
  <span class="task open"><svg viewBox="0 0 80 80"><circle cx="40" cy="40" r="37" fill="#ffcd40"/><path d="M8 21.500A37 37 0 0 1 72.500 22H40L24 49z" fill="#db4537"/><path d="M8 21.500A37 37 0 0 0 38 77l14-26-12 6-16-8z" fill="#1da462"/><circle cx="40" cy="40" r="17" fill="#f1f1f1"/><circle cx="40" cy="40" r="13.500" fill="#4c8bf5"/></svg></span>
  <span class="task"><svg viewBox="0 0 80 80"><path d="M2 2h76v76H2z" fill="#008a00"/><path d="M17 25l40-6 9 5v38l-9 5-40-10z" fill="#fff"/><path d="M26 25c0-15 8-14 10-3M31 24c3-14 11-14 14-3" fill="none" stroke="#fff" stroke-width="2.500"/><path d="M25 36l9-2v10h-9zM36 33.500l12-2V44H36zM25 46h9v9l-9-1.500zM36 46h12v12l-12-2z" fill="#008a00"/></svg></span>
  <span class="task"><svg viewBox="0 0 80 80"><path d="M0 0h80v80H0z" fill="#b9a9a9"/><path d="M0 0h80v2H0z" fill="#222"/><path d="M2 2h76v76H2z" fill="#cf080c"/><path d="M40 15l23 13v25L40 66 17 53V28z" fill="none" stroke="#fff" stroke-width="2.500"/><path d="M24 31l16 8 16-8M40 39v20" fill="none" stroke="#fff" stroke-width="4"/></svg></span>
  <span class="task"><svg viewBox="0 0 80 80"><defs><linearGradient id="eg" x1="0" y1="0" x2="1" y2=".5"><stop offset="0" stop-color="#2b9fe6"/><stop offset=".5" stop-color="#35c1d8"/><stop offset="1" stop-color="#66dd55"/></linearGradient></defs><path d="M0 36C3 12 20 0 40 0c24 0 40 16 40 34 0 14-11 19-21 19-9 0-14-3-12-6 8-9 1-22-14-24C18 21 4 26 0 36z" fill="url(#eg)"/><path d="M0 40C0 26 13 19 26 19c15 0 23 8 21 14-12-6-26 5-24 22 1 11 8 20 17 25C17 80 0 62 0 40z" fill="#0d7ad8"/><path d="M32 32C20 42 18 62 32 76c14 9 38 0 42-15-6 3-12 4-18 4-16 0-26-12-24-33z" fill="#1250a0"/></svg></span>
  <span class="task current"><svg><use href="#i-arcmap"/></svg></span>
  <div class="tray">
    <svg class="kbd" viewBox="0 0 60 36"><rect x="1" y="1" width="58" height="34" rx="2" fill="#fff"/><path d="M5 8h50M5 16h50M5 26h6M48 26h7" stroke="#3a3020" stroke-width="6" stroke-dasharray="6 2"/><rect x="17" y="24" width="26" height="5" fill="none" stroke="#3a3020" stroke-width="1.500"/></svg>
    <span class="battery"><b>54%</b></span>
    <svg class="more" viewBox="0 0 20 12"><path d="M10 0l10 12H0z" fill="#fff"/></svg>
    <svg class="wheel" viewBox="0 0 40 40"><circle cx="20" cy="20" r="19" fill="#747a80" stroke="#b8bcc0"/><circle cx="20" cy="20" r="11" fill="none" stroke="#fff" stroke-width="3"/><path d="M20 20v10M20 20l-9-5M20 20l9-5" stroke="#fff" stroke-width="3"/></svg>
    <svg class="flag" viewBox="0 0 40 40"><path d="M3 1v38" stroke="#fff" stroke-width="4"/><path d="M5 3q8-4 14 1t18 6l-1 13q-10 0-16-4T5 18z" fill="#fff"/><circle cx="30" cy="30" r="10" fill="#e01010"/><path d="M26 25.500l8 9M34 25.500l-8 9" stroke="#fff" stroke-width="3"/></svg>
    <svg class="signal" viewBox="0 0 40 30"><path d="M1 23h5v7H1zM9 18h5v12H9zM17 12h5v18h-5z" fill="#fff"/><path d="M25 6h5v24h-5zM33 1h5v29h-5z" fill="#9a9284"/></svg>
    <svg class="sound" viewBox="0 0 40 38"><path d="M1 11h6L17 1v36L7 27H1z" fill="#fff"/><path d="M22 13q4 6 0 12M27 9q6 10 0 20M32 5q9 14 0 28" fill="none" stroke="#d8d0c4" stroke-width="1.800"/></svg>
    <span class="lang">ENG</span>
    <span class="clock"><span>15:09</span><span>28/03/2021</span></span>
  </div>
</footer>

<div class="dialog">
  <div class="dialog-head"><span>Extensions</span><b class="dialog-x"><svg viewBox="0 0 14 14"><path d="M2 1l10 12M12 1L2 13" stroke="#fff" stroke-width="2"/></svg></b></div>
  <div class="dialog-body">
    <p class="prompt">Select the extensions you want to use.</p>
    <ul class="ext">
      <li><span class="check"><svg><use href="#i-chk"/></svg></span><span class="name picked-ext">3D Analyst</span></li>
      <li><span class="check"><svg><use href="#i-chk"/></svg></span><span class="name">ArcScan</span></li>
      <li><span class="check"><svg><use href="#i-chk"/></svg></span><span class="name">Geostatistical Analyst</span></li>
      <li><span class="check"><svg><use href="#i-chk"/></svg></span><span class="name">Network Analyst</span></li>
      <li><span class="check"><svg><use href="#i-chk"/></svg></span><span class="name">Publisher</span></li>
      <li><span class="check"><svg><use href="#i-chk"/></svg></span><span class="name">Schematics</span></li>
      <li><span class="check"><svg><use href="#i-chk"/></svg></span><span class="name">Spatial Analyst</span></li>
      <li><span class="check"><svg><use href="#i-chk"/></svg></span><span class="name">Tracking Analyst</span></li>
    </ul>
    <p class="desc-label">Description:</p>
    <div class="desc"><p>3D Analyst 10.6.1</p><p>Copyright ©1999-2018 Esri Inc. All Rights Reserved</p><p>&nbsp;</p><p class="about">Provides tools for surface modeling and 3D visualization.</p></div>
    <button class="close-btn">Close</button>
  </div>
</div>
</body>
</html>
```
FILE: styles.css
```css
* { box-sizing: border-box; margin: 0; padding: 0; }
body {
  width: 3200px; height: 1800px; overflow: hidden; position: relative;
  display: flex; flex-direction: column;
  background: linear-gradient(90deg, #f0f0f0 0, #f5f5f5 40%, #fcfcfc 85%);
  font: 28px/1.2 "Open Sans", "Noto Sans", sans-serif; color: #111;
}
svg { display: block; flex: none; }
i, b { font-style: normal; flex: none; }
.defs { position: absolute; }

/* title bar */
.titlebar { height: 58px; display: flex; align-items: center; background: #ebebeb; border-bottom: 2px solid #dadada; flex: none; }
.app-icon { width: 40px; height: 41px; margin-left: 2px; }
.window-title { flex: 1; text-align: center; font-size: 35.500px; font-weight: 400; color: #222; padding-left: 309px; padding-top: 5px; }
.window-controls { width: 351px; height: 100%; display: flex; align-items: flex-start; }
.min { width: 16px; height: 3px; margin: 28px 0 0 124px; }
.max { width: 18px; height: 17px; margin: 17px 0 0 50px; }
.win-close { width: 116px; height: 51px; margin-left: 24px; background: #bcbcbc; display: flex; align-items: center; justify-content: center; margin-right: 3px; }
.win-close svg { width: 14px; height: 12px; }

/* menu and toolbars */
.chrome { height: 192px; flex: none; }
.menu { height: 65px; display: flex; align-items: center; padding-left: 31px; padding-bottom: 1px; }
.menu span { white-space: nowrap; letter-spacing: .1px; }
.m1 { width: 85px; } .m2 { width: 89px; } .m3 { width: 103px; } .m4 { width: 188px; } .m5 { width: 112px; }
.m6 { width: 160px; } .m7 { width: 235px; } .m8 { width: 181px; } .m9 { width: 162px; }
.bar-row { height: 60px; display: flex; padding-left: 8px; margin-bottom: 5px; }
.toolbar { height: 60px; display: flex; align-items: center; border-radius: 8px 0 0 8px; background: linear-gradient(#fdfdfd, #fafafa 40%, #efefef); }
.bar-row:not(.second) .toolbar { width: 1514px; }
.tools { width: 1284px; }
.grip { width: 5px; height: 36px; margin: 0 8px 0 6px; background: repeating-linear-gradient(#b5b5b5 0 6px, transparent 6px 10.500px); }
.btn { width: 54.700px; height: 55px; flex: none; display: flex; align-items: center; justify-content: center; }
.btn svg { width: 38px; height: 38px; }
.btn .xy { overflow: visible; }
.active { background: #e4eef9; border: 2.500px solid #3897fd; }
.flip svg { transform: scaleX(-1); }
.blue { fill: #1f55b5; } .gray { fill: #b8b8b8; }
.sep { width: 15.700px; height: 36px; background: linear-gradient(#bdbdbd, #bdbdbd) center / 2px 100% no-repeat; }
.drop { width: 22px; height: 9px; background: #000; clip-path: polygon(5px 0, 18px 0, 11.500px 9px); margin-top: 5px; }
.tools .drop { width: 27px; }
.drop.off { background: #a6a6a6; }
.scale-box { width: 370px; height: 54px; margin-left: 4px; border: 3px solid #abadb3; background: #fff; display: flex; align-items: center; justify-content: space-between; padding: 0 8px 4px 7px; }
.scale-box svg { width: 19px; height: 14px; margin-top: 4px; }
.down { transform: rotate(180deg); }
.overflow { width: 27px; height: 62px; margin-top: 2px; background: linear-gradient(#f4f4f4, #a0a0a0); border-radius: 0 8px 0 0; display: flex; flex-direction: column; align-items: center; padding-top: 35px; flex: none; }
.overflow i { width: 13px; height: 3px; background: #000; margin-bottom: 5px; }
.overflow b { width: 13px; height: 9px; background: #000; clip-path: polygon(0 0, 100% 0, 50% 100%); }
.classify { margin-left: 221px; width: 965px; }
.classify .label { width: 177px; margin-left: 11px; white-space: nowrap; }
.layer-box { width: 446px; height: 48px; margin: 0 4px 0 2px; border: 3px solid #787878; border-bottom-color: #eee; background: #f0f0f0; display: flex; justify-content: flex-end; align-items: stretch; }
.layer-box span { width: 40px; background: #f6f6f6; border-bottom: 3px solid #777; display: flex; align-items: center; justify-content: center; }
.layer-box .drop { width: 20px; height: 12px; margin: 0; clip-path: polygon(0 0, 100% 0, 50% 100%); }
.classify .btn + .drop { width: 28px; clip-path: polygon(8px 0, 22px 0, 15px 9px); }

/* workspace */
.workspace { height: 1413px; flex: none; display: flex; align-items: flex-start; }
.toc { width: 500px; height: 1410px; display: flex; flex-direction: column; margin-right: 11px; }
.toc-head { height: 63px; background: linear-gradient(90deg, #bfccd9, #d7e4f2); display: flex; align-items: center; padding-left: 10px; }
.toc-head h2 { font-size: 35.500px; font-weight: 400; width: 419px; padding-top: 5px; white-space: nowrap; }
.pin { width: 17px; height: 22px; }
.x { width: 20px; height: 19px; margin-left: 22px; }
.toc-tools { height: 63px; display: flex; align-items: center; padding-left: 10px; background: linear-gradient(#fbfbfb, #efefef); margin-top: 1px; }
.tree { height: 1282px; width: 498px; border: 3px solid #868b95; border-left-width: 2px; background: #fff; display: flex; flex-direction: column; }
.tree-main { display: flex; height: 1235px; }
.rows { width: 449px; overflow: hidden; padding-top: 2px; white-space: nowrap; }
.row { height: 45px; display: flex; align-items: center; }
.cls { padding-left: 103px; }
.sw { width: 37px; height: 27px; margin: 4px 7px 0 0; border: 2px solid #808080; }
.c11 { background: #660c40; } .c12 { background: #b0e880; } .c13 { background: #4e4442; } .c14 { background: #008298; } .c15 { background: #aa00ff; }
.c16 { background: #ff2226; } .c17 { background: #0865e6; } .c18 { background: #c27a66; } .c19 { background: #9cd6c0; } .c20 { background: #78a200; }
.c21 { background: #00ffa2; } .c22 { background: #d66cce; } .c23 { background: #0c9038; } .c24 { background: #be0032; } .c25 { background: #7e5a14; }
.red { background: red; } .green { background: lime; } .blue-sw { background: blue; }
.chan { width: 88px; } .chan.wide { width: 94px; }
.dir { padding-left: 15px; }
.dir svg { width: 38px; height: 31px; margin-right: 13px; margin-top: 4px; }
.dir span { letter-spacing: .25px; }
.layer { padding-left: 23px; }
.minus { width: 23px; height: 23px; border: 2px solid #a8a8a8; border-radius: 3px; background: linear-gradient(#4a62a8, #4a62a8) center / 13px 2px no-repeat, linear-gradient(#fff, #e3e3e3); margin: 5px 19px 0 0; }
.check { width: 29px; height: 28px; border: 2.500px solid #111; background: #fff; flex: none; }
.check svg { width: 24px; height: 23px; }
.picked { background: #3399ff; color: #fff; height: 45px; line-height: 42px; width: 293px; padding-left: 5px; margin-left: 14px; }
.plain { margin-left: 19px; }
.head { padding-left: 160px; }
.stretch { display: flex; padding: 0 0 0 103px; }
.ramp { width: 34px; height: 90px; background: linear-gradient(#f2f2f2, #888 50%, #000); margin: 1px 10px 0 0; }
.range { height: 121px; margin-top: -2px; display: flex; flex-direction: column; justify-content: space-between; line-height: 32px; }
.vscroll { width: 38px; background: #f0f0f0; display: flex; flex-direction: column; align-items: center; justify-content: flex-start; }
.vscroll svg, .hscroll svg { width: 19px; height: 14px; }
.tree .vscroll { margin-left: 1px; padding: 18px 0 15px; }
.tree .vscroll .thumb { width: 38px; height: 270px; background: #cdcdcd; margin: 193px 0 709px; }
.hscroll { display: flex; align-items: center; background: #f0f0f0; }
.left { transform: rotate(-90deg); } .right { transform: rotate(90deg); }
.tree .hscroll { height: 37px; margin: 0 3px; padding-left: 11px; }
.tree .hscroll .thumb { width: 145px; height: 37px; background: #cdcdcd; margin: 0 198px 0 42px; }

.map-pane { width: 2632px; height: 1410px; margin-top: 1px; display: flex; flex-direction: column; border-left: 4px solid #7b7b7b; border-right: 3px solid #e6e6e6; }
.map-main { height: 1365px; display: flex; border-top: 4px solid #7b7b7b; }
.viewport { width: 2583px; background: #fff; border: solid #e8e8e8; border-width: 0 2px 2px 0; padding: 83px 0 0 337px; }
.raster { width: 1198px; height: 1207px; }
.map-main .vscroll { margin-left: 4px; width: 36px; padding: 17px 0 16px; }
.map-main .vscroll .thumb { width: 36px; height: 1270px; background: #cdcdcd; margin: 12px 0 20px; }
.map-foot { height: 38px; margin-top: 2px; display: flex; align-items: center; background: #f0f0f0; }
.view-btn { width: 42px; height: 37px; display: flex; align-items: center; justify-content: center; }
.view-btn svg { width: 25px; height: 25px; }
.view-btn.on { background: #b4d6f8; border: 2px solid #4d9bf0; }
.map-foot .sep { width: 20px; height: 30px; }
.map-foot .hscroll { flex: 1; height: 37px; padding-left: 12px; }
.map-foot .hscroll .thumb { width: 2308px; height: 36px; background: #cdcdcd; margin: 0 14px 0 11px; }

.tabs { width: 57px; padding: 6px 0 0 7px; display: flex; flex-direction: column; }
.tab { width: 54px; background: #f2f2f2; border: 2.500px solid #a9a9a9; border-radius: 8px 0 0 8px; padding: 10px 0 0 3px; display: flex; flex-direction: column; color: #555; }
.tab svg { width: 40px; height: 40px; }
.tab span { writing-mode: vertical-rl; font-size: 29px; letter-spacing: .6px; line-height: 40px; width: 40px; margin-top: 7px; white-space: nowrap; }
.t-results { height: 174px; } .t-toolbox { height: 223px; } .t-search { height: 170px; margin-top: 33px; }

.status { height: 49px; flex: none; background: #f0f0f0; display: flex; align-items: center; padding: 3px 0 0 2567px; white-space: nowrap; border-top: 2px solid #e6e6e6; letter-spacing: -.650px; }

/* taskbar */
.taskbar { height: 88px; flex: none; position: relative; display: flex; align-items: center; background: #5b4a2c; border-top: 2px solid #9c8c6c; color: #fff; }
.wallpaper { position: absolute; left: 1050px; top: 0; width: 1140px; height: 86px; }
.start { width: 90px; padding-left: 19px; z-index: 1; }
.start svg { width: 52px; height: 53px; }
.task { width: 124px; height: 86px; margin: 0 2px; display: flex; align-items: center; justify-content: center; z-index: 1; flex: none; }
.task svg { width: 80px; height: 80px; }
.adobe { width: 80px; height: 80px; background: #fff; display: flex; flex-direction: column; align-items: center; }
.task .adobe svg { height: 56px; }
.adobe b { font: 700 20px/24px "Open Sans", sans-serif; letter-spacing: -1.200px; color: #1d1d1b; }
.open { background: #7f7159; border: 2px solid #9b8e76; border-right: 8px double #a89c86; }
.current { background: rgba(225, 190, 170, .6); border: 2px solid #efe4d8; }
.tray { display: flex; align-items: center; height: 86px; margin-left: 812px; z-index: 1; }
.kbd { width: 60px; height: 36px; }
.battery { width: 100px; height: 51px; margin: 0 0 0 34px; border: 4px solid #fff; outline: 1.500px solid #555; background: linear-gradient(90deg, #00cc66 60%, #464646 60%); display: flex; align-items: center; justify-content: center; position: relative; box-shadow: inset 0 0 0 2px #464646; }
.battery::after { content: ""; position: absolute; right: -11px; top: 9px; width: 8px; height: 25px; background: #fff; }
.battery b { font-weight: 400; font-size: 27px; padding-left: 4px; margin-top: -3px; }
.more { width: 20px; height: 12px; margin: 46px 0 0 81px; }
.wheel { width: 40px; height: 40px; margin: 4px 0 0 70px; }
.flag { width: 40px; height: 40px; margin: 4px 0 0 20px; }
.signal { width: 40px; height: 30px; margin: 4px 0 0 20px; }
.sound { width: 40px; height: 37px; margin: 4px 0 0 20px; }
.lang { margin: 6px 0 0 30px; width: 60px; }
.clock { display: flex; flex-direction: column; align-items: center; line-height: 41px; margin-left: 32px; width: 152px; padding-top: 3px; white-space: nowrap; }

/* extensions dialog */
.dialog { position: absolute; left: 1113px; top: 235px; width: 975px; height: 1243px; background: #eabc70; border: 1.500px solid #9d8150; padding: 0 18px 18px; color: #1c1c1c; font-family: "Liberation Sans", Arial, sans-serif; font-size: 26px; letter-spacing: .22px; }
.dialog-head { height: 76px; display: flex; justify-content: center; font: 35px/76px "Open Sans", sans-serif; letter-spacing: -.1px; padding-top: 2px; position: relative; }
.dialog-x { position: absolute; right: 0; top: 0; width: 84px; height: 52px; background: #c75050; display: flex; align-items: center; justify-content: center; }
.dialog-x svg { width: 14px; height: 13px; }
.dialog-body { height: 1147px; background: #f0f0f0; border: 1.500px solid #b99a62; padding: 30px 25px 0 28px; display: flex; flex-direction: column; }
.dialog p { line-height: 32.500px; white-space: nowrap; }
.prompt { padding: 4px 0 0 1px; height: 53px; }
.ext { list-style: none; height: 650px; border: 2.500px solid #828790; background: #fff; padding: 2px 0 0 59px; }
.ext li { height: 40px; display: flex; align-items: center; position: relative; }
.ext li::before { content: ""; position: absolute; left: -28px; top: 20px; width: 28px; border-top: 2px dotted #8c8c8c; }
.ext li:not(:last-child)::after { content: ""; position: absolute; left: -28px; top: 20px; height: 40px; border-left: 2px dotted #8c8c8c; }
.ext .check { margin-bottom: 1px; }
.name { margin-left: 16px; padding: 0 6px; line-height: 40px; white-space: nowrap; }
.picked-ext { background: #3399ff; color: #fff; }
.desc-label { margin-top: 21px; height: 46px; }
.desc { height: 245px; border: 2.500px solid #b4b7bd; padding: 7px 0 0 4px; box-shadow: inset 0 0 0 2px #fafafa; }
.close-btn { align-self: flex-end; width: 183px; height: 54px; margin: 24px 5px 0 0; padding-right: 6px; border: 3px solid #7eb4ea; background: linear-gradient(#ecf4fc, #dcecfc); font: inherit; color: inherit; }
```
